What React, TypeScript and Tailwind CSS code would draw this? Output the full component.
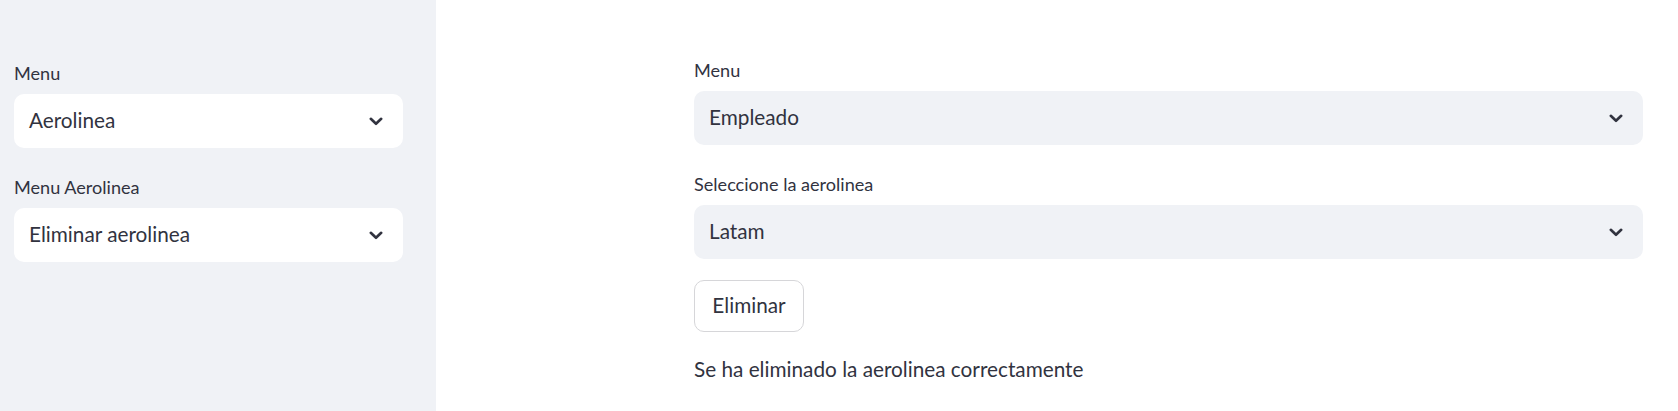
function Chevron() {
  return (
    <svg width="14" height="9" viewBox="0 0 14 9" fill="none" className="shrink-0">
      <polyline points="1.8,1.8 7,6.8 12.2,1.8" stroke="#31333f" strokeWidth="2.6" strokeLinecap="round" strokeLinejoin="round" />
    </svg>
  );
}

function SelectBox({ label, value, variant }: { label: string; value: string; variant: "white" | "gray" }) {
  return (
    <div className="flex flex-col">
      <div className="h-[24px] flex items-center text-[18.1px] text-[#31333f] leading-none">{label}</div>
      <div
        className={
          "mt-[9px] h-[54px] rounded-[10px] flex items-center justify-between pl-[15px] pr-[20px] text-[20.75px] text-[#31333f] " +
          (variant === "white" ? "bg-white" : "bg-[#f0f2f6]")
        }
      >
        <span>{value}</span>
        <Chevron />
      </div>
    </div>
  );
}

export default function App() {
  return (
    <div className="flex h-screen w-full bg-white" style={{ fontFamily: "Lato, 'Noto Sans', sans-serif" }}>
      <aside className="w-[436px] shrink-0 bg-[#f0f2f6] pl-[14px] pt-[61px]">
        <div className="w-[389px] flex flex-col gap-[27px]">
          <SelectBox label="Menu" value="Aerolinea" variant="white" />
          <SelectBox label="Menu Aerolinea" value="Eliminar aerolinea" variant="white" />
        </div>
      </aside>
      <main className="flex-1 pl-[258px] pt-[58px]">
        <div className="w-[949px] flex flex-col">
          <div className="flex flex-col gap-[27px]">
            <SelectBox label="Menu" value="Empleado" variant="gray" />
            <SelectBox label="Seleccione la aerolinea" value="Latam" variant="gray" />
          </div>
          <button className="mt-[21px] w-[110px] h-[52px] rounded-[10px] border border-[#d6d6d9] bg-white text-[20.75px] text-[#31333f] flex items-center justify-center">
            Eliminar
          </button>
          <p className="mt-[21px] text-[20.75px] leading-[32px] text-[#31333f]">Se ha eliminado la aerolinea correctamente</p>
        </div>
      </main>
    </div>
  );
}
